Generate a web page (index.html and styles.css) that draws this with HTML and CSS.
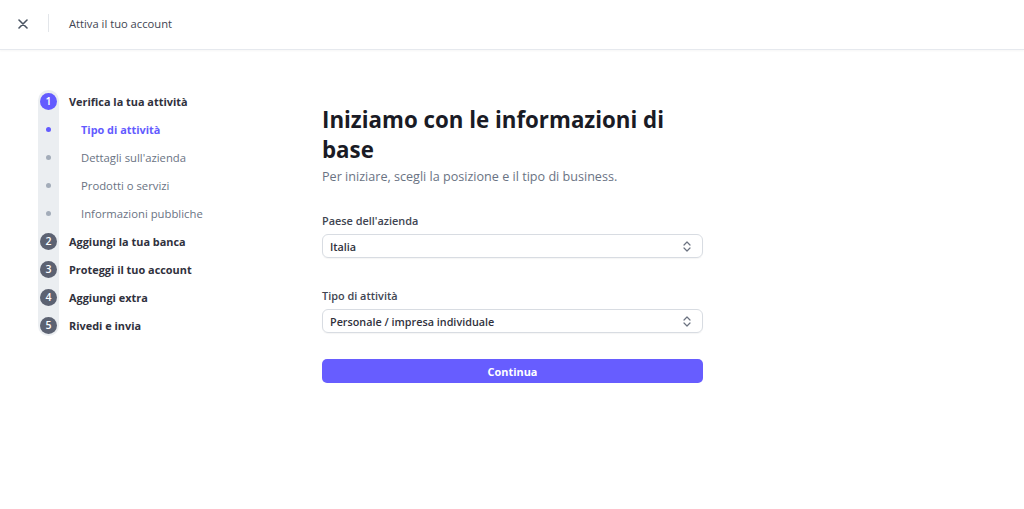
FILE: index.html
```html
<!DOCTYPE html>
<html lang="it">
<head>
<meta charset="utf-8">
<title>Attiva il tuo account</title>
<link rel="stylesheet" href="styles.css">
</head>
<body>
<header class="topbar">
  <button class="close" aria-label="Chiudi">
    <svg width="10" height="10" viewBox="0 0 10 10"><path d="M1 1L9 9M9 1L1 9" stroke="#4b5563" stroke-width="1.6" stroke-linecap="round"/></svg>
  </button>
  <span class="divider"></span>
  <span class="topbar-title">Attiva il tuo account</span>
</header>
<div class="layout">
  <nav class="steps">
    <div class="track"></div>
    <ul class="step-list">
      <li class="step main active"><span class="marker num">1</span><span class="label">Verifica la tua attività</span></li>
      <li class="step sub current"><span class="marker dot"></span><span class="label">Tipo di attività</span></li>
      <li class="step sub"><span class="marker dot"></span><span class="label">Dettagli sull'azienda</span></li>
      <li class="step sub"><span class="marker dot"></span><span class="label">Prodotti o servizi</span></li>
      <li class="step sub"><span class="marker dot"></span><span class="label">Informazioni pubbliche</span></li>
      <li class="step main"><span class="marker num">2</span><span class="label">Aggiungi la tua banca</span></li>
      <li class="step main"><span class="marker num">3</span><span class="label">Proteggi il tuo account</span></li>
      <li class="step main"><span class="marker num">4</span><span class="label">Aggiungi extra</span></li>
      <li class="step main"><span class="marker num">5</span><span class="label">Rivedi e invia</span></li>
    </ul>
  </nav>
  <main class="content">
    <h1 class="title">Iniziamo con le informazioni di base</h1>
    <p class="subtitle">Per iniziare, scegli la posizione e il tipo di business.</p>
    <div class="field">
      <label class="field-label">Paese dell'azienda</label>
      <div class="select"><span>Italia</span>
        <svg class="chev" width="8" height="11" viewBox="0 0 8 11"><path d="M1 4L4 1L7 4M1 7L4 10L7 7" fill="none" stroke="#6b7280" stroke-width="1.2" stroke-linecap="round" stroke-linejoin="round"/></svg>
      </div>
    </div>
    <div class="field">
      <label class="field-label">Tipo di attività</label>
      <div class="select"><span>Personale / impresa individuale</span>
        <svg class="chev" width="8" height="11" viewBox="0 0 8 11"><path d="M1 4L4 1L7 4M1 7L4 10L7 7" fill="none" stroke="#6b7280" stroke-width="1.2" stroke-linecap="round" stroke-linejoin="round"/></svg>
      </div>
    </div>
    <button class="primary">Continua</button>
  </main>
</div>
</body>
</html>
```

FILE: styles.css
```css
* { box-sizing: border-box; }
html, body { margin: 0; padding: 0; background: #fff; }
body {
  font-family: "Open Sans", "Noto Sans", "Liberation Sans", sans-serif;
  color: #30313d;
  -webkit-font-smoothing: antialiased;
}
.topbar {
  height: 50px;
  display: flex;
  align-items: center;
  border-bottom: 1px solid #e6e9ee;
  box-shadow: 0 1px 2px rgba(0,0,0,0.04);
}
.close {
  border: 0;
  background: none;
  padding: 0;
  margin-left: 18px;
  width: 10px;
  height: 10px;
  display: flex;
  margin-top: -2px;
}
.divider {
  width: 1px;
  height: 18px;
  background: #e3e6ea;
  margin-left: 20px;
  margin-top: -3px;
}
.topbar-title {
  margin-left: 20px;
  font-size: 11.2px;
  color: #414552;
  margin-top: -3px;
}
.layout {
  display: flex;
  padding-top: 40px;
}
.steps {
  position: relative;
  margin-left: 38px;
  width: 284px;
}
.track {
  position: absolute;
  left: 0;
  top: 0;
  width: 21px;
  height: 246px;
  background: #ebeef1;
  border-radius: 11px;
}
.step-list {
  position: relative;
  list-style: none;
  margin: -3px 0 0;
  padding: 0;
}
.step {
  height: 28px;
  display: flex;
  align-items: center;
}
.marker {
  width: 21px;
  display: flex;
  align-items: center;
  justify-content: center;
  flex: none;
}
.num {
  width: 17px;
  height: 17px;
  margin: 0 2px;
  border-radius: 50%;
  background: #5c6272;
  color: #fff;
  font-size: 10.5px;
  font-weight: 600;
  line-height: 1;
}
.step.active .num { background: #635bff; }
.dot::before {
  content: "";
  width: 5px;
  height: 5px;
  border-radius: 50%;
  background: #a3acb9;
}
.step.current .dot::before { background: #635bff; }
.label { font-size: 11.3px; }
.main .label {
  margin-left: 10px;
  font-weight: 700;
  color: #30313d;
  font-size: 10.9px;
}
.sub .label {
  margin-left: 22px;
  color: #6a7383;
}
.sub.current .label {
  color: #635bff;
  font-weight: 700;
  font-size: 10.9px;
}
.content {
  width: 381px;
  padding-top: 15px;
}
.title {
  margin: 0;
  font-size: 22.3px;
  line-height: 30px;
  font-weight: 700;
  color: #1a1b25;
}
.subtitle {
  margin: 3px 0 0;
  font-size: 12.6px;
  color: #6a7383;
}
.field { margin-top: 28px; }
.field + .field { margin-top: 30px; }
.field-label {
  display: block;
  font-size: 10.9px;
  font-weight: 600;
  color: #414552;
  margin-bottom: 6px;
}
.select {
  height: 24px;
  border: 1px solid #d8dce2;
  border-radius: 6px;
  display: flex;
  align-items: center;
  justify-content: space-between;
  padding: 0 11px 0 7px;
  font-size: 10.8px;
  font-weight: 600;
  color: #30313d;
  box-shadow: 0 1px 1px rgba(0,0,0,0.04);
}
.primary {
  margin-top: 26px;
  width: 100%;
  height: 24px;
  border: 0;
  border-radius: 5px;
  background: #675dff;
  color: #fff;
  font-family: inherit;
  font-size: 10.9px;
  font-weight: 700;
  padding: 0;
}
```
